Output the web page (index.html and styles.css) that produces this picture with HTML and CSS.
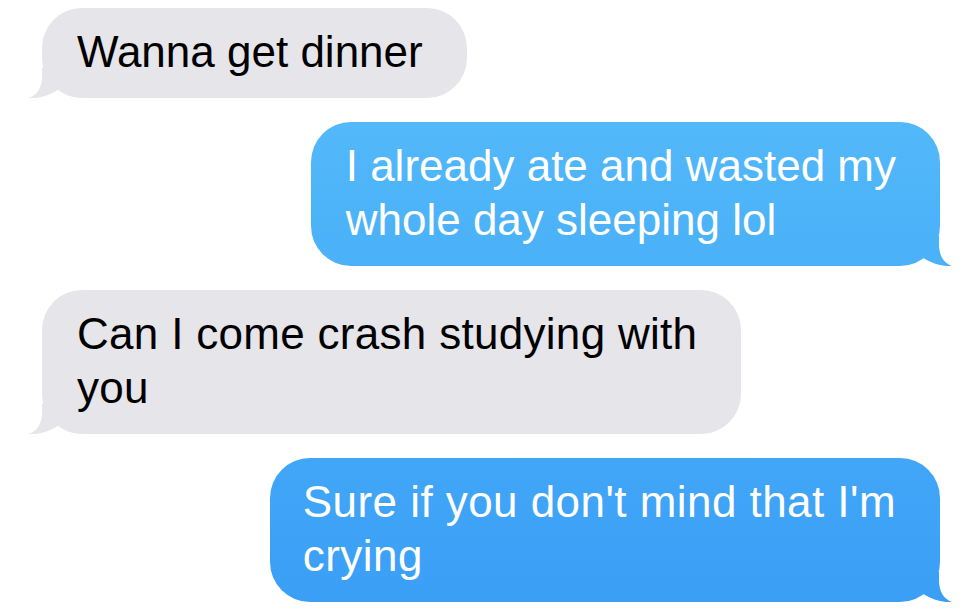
FILE: index.html
```html
<!DOCTYPE html>
<html>
<head>
<meta charset="utf-8">
<link rel="stylesheet" href="styles.css">
</head>
<body>
<div class="thread">
  <div class="msg in"><div class="bubble">Wanna get dinner</div></div>
  <div class="msg out"><div class="bubble">I already ate and wasted my<br>whole day sleeping lol</div></div>
  <div class="msg in"><div class="bubble spaced">Can I come crash studying with<br>you</div></div>
  <div class="msg out"><div class="bubble wide">Sure if you don't mind that I'm<br>crying</div></div>
</div>
</body>
</html>
```

FILE: styles.css
```css
html, body {
  margin: 0;
  padding: 0;
  background: #ffffff;
}
body {
  width: 980px;
  height: 613px;
  overflow: hidden;
  font-family: "Liberation Sans", Arial, sans-serif;
}
.thread {
  display: flex;
  flex-direction: column;
  gap: 24px;
  padding: 8px 40px 0 42px;
}
.msg {
  display: flex;
}
.msg.in { justify-content: flex-start; }
.msg.out { justify-content: flex-end; }
.bubble {
  position: relative;
  font-size: 44px;
  line-height: 54px;
  padding: 17px 44px 19px 35px;
  border-radius: 40px;
  white-space: nowrap;
}
.bubble.spaced { letter-spacing: 0.3px; }
.bubble.wide { letter-spacing: 0.45px; padding-left: 33px; }
.in .bubble {
  background: #e5e5ea;
  color: #000;
}
.out .bubble {
  background: linear-gradient(180deg, #58bffa 0px, #3a9ef6 613px) fixed;
  color: #fff;
}
.bubble::after {
  content: "";
  position: absolute;
  bottom: 0;
  width: 40px;
  height: 30px;
  background: inherit;
}
.in .bubble::after {
  left: -13px;
  clip-path: path("M 13 0 L 13 8 C 13 20 8 27 0 30 C 10 30.5 22 27 30 21 L 40 0 Z");
}
.out .bubble::after {
  right: -12px;
  clip-path: path("M 27 0 L 27 8 C 27 20 32 27 40 30 C 30 30.5 18 27 10 21 L 0 0 Z");
}
```
